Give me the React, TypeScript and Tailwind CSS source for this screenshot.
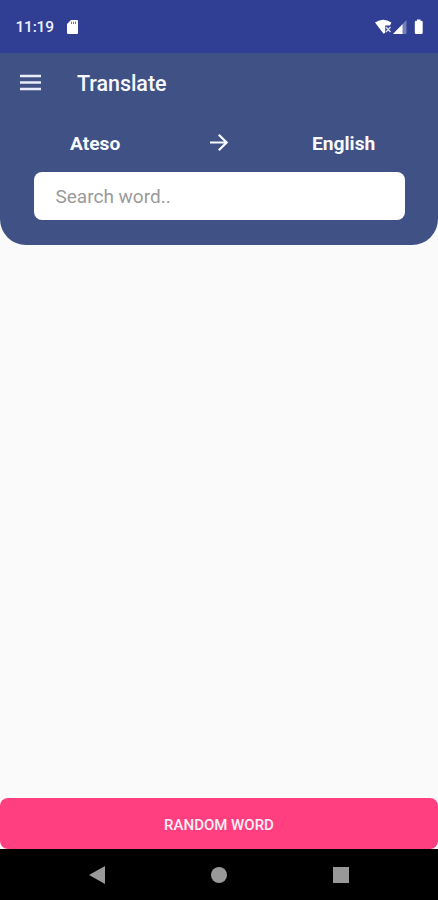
function StatusBar() {
  return (
    <div className="flex h-[53px] items-center bg-[#303f94] pl-[15.5px] pr-[14px] text-[#eef2ff]">
      <span className="w-[38px] whitespace-nowrap pt-px text-[15.5px] font-medium leading-5 tracking-[-0.2px]">11:19</span>
      <svg className="ml-[13.5px] h-[14px] w-[11px]" viewBox="0 0 11 14">
        <path d="M4 0h6a1 1 0 0 1 1 1v12a1 1 0 0 1-1 1H1a1 1 0 0 1-1-1V4z" fill="#fff" />
        <path d="M4.5 1.700v2.300M6.500 1.700v2.300M8.500 1.700v2.300" stroke="#303f94" strokeOpacity="0.7" strokeWidth="1" />
      </svg>
      <svg className="ml-auto h-[16px] w-[49px]" viewBox="375 19 49 16">
        <path d="M375 22.500q8.200-5.500 16.400 0l-1.400 3h-4.800v7.300l-1.600.9z" fill="#fff" />
        <path d="M386 27l4.500 5M390.500 27l-4.500 5" stroke="#d5daf0" strokeWidth="1.400" />
        <path d="M406.500 20v14h-13.500z" fill="#7580b8" />
        <path d="M402.500 24.200v9.800h-9.500z" fill="#fff" />
        <path d="M417 19.500h3.500v1.200h1a1.200 1.200 0 0 1 1.200 1.200v10.800a1.200 1.200 0 0 1-1.200 1.200h-5.500a1.200 1.200 0 0 1-1.200-1.200V21.900a1.200 1.200 0 0 1 1.200-1.200h1z" fill="#fff" />
      </svg>
    </div>
  );
}

function TranslatePanel() {
  return (
    <header className="h-[191.5px] rounded-b-[26px] bg-[#3f5185] text-[#f8f9ff]">
      <div className="flex h-[60px] items-center pl-5">
        <svg className="h-[18px] w-[21px]" viewBox="0 0 21 18">
          <path d="M0 2h21M0 8.500h21M0 15h21" stroke="#e9edfc" strokeWidth="2.300" />
        </svg>
        <h1 className="ml-[36px] pt-px text-[21.5px] font-medium leading-7 tracking-[-0.05px]">Translate</h1>
      </div>
      <div className="flex h-[59px] items-center justify-between pl-[70px] pr-[62px] text-[19.2px] font-bold">
        <span className="w-[64px] pt-[3px]">Ateso</span>
        <svg className="-ml-[8px] h-[18px] w-[18px]" viewBox="0 0 18 18" fill="none" stroke="#f8f9ff" strokeWidth="2.200">
          <path d="M0 8.500h16.500M8.800 0.800l7.800 7.700-7.800 7.700" />
        </svg>
        <span className="w-[64px] pt-[3px]">English</span>
      </div>
      <input
        type="text"
        placeholder="Search word.."
        className="ml-[34px] block h-[47.500px] w-[370.500px] rounded-[8px] bg-white px-[21.5px] pt-[2px] text-[19px] text-gray-800 outline-none placeholder:text-[#9a9a9a]"
      />
    </header>
  );
}

function NavigationBar() {
  return (
    <nav className="flex h-[51px] items-center justify-between bg-black pl-[89px] pr-[89.5px]">
      <svg className="h-[18px] w-4" viewBox="0 0 16 18">
        <path d="M0 9l16-9v18z" fill="#999" />
      </svg>
      <div className="h-4 w-4 rounded-full bg-[#999]" />
      <div className="h-4 w-4 bg-[#999]" />
    </nav>
  );
}

export default function App() {
  return (
    <div className="flex h-[900px] w-full flex-col bg-[#fafafa] font-[Roboto,sans-serif]">
      <StatusBar />
      <TranslatePanel />
      <main className="flex-1" />
      <button className="h-[51px] w-full rounded-[8px] bg-[#ff3f80] pt-[3px] text-[15px] font-medium text-[#fff0f6]">
        RANDOM WORD
      </button>
      <NavigationBar />
    </div>
  );
}
